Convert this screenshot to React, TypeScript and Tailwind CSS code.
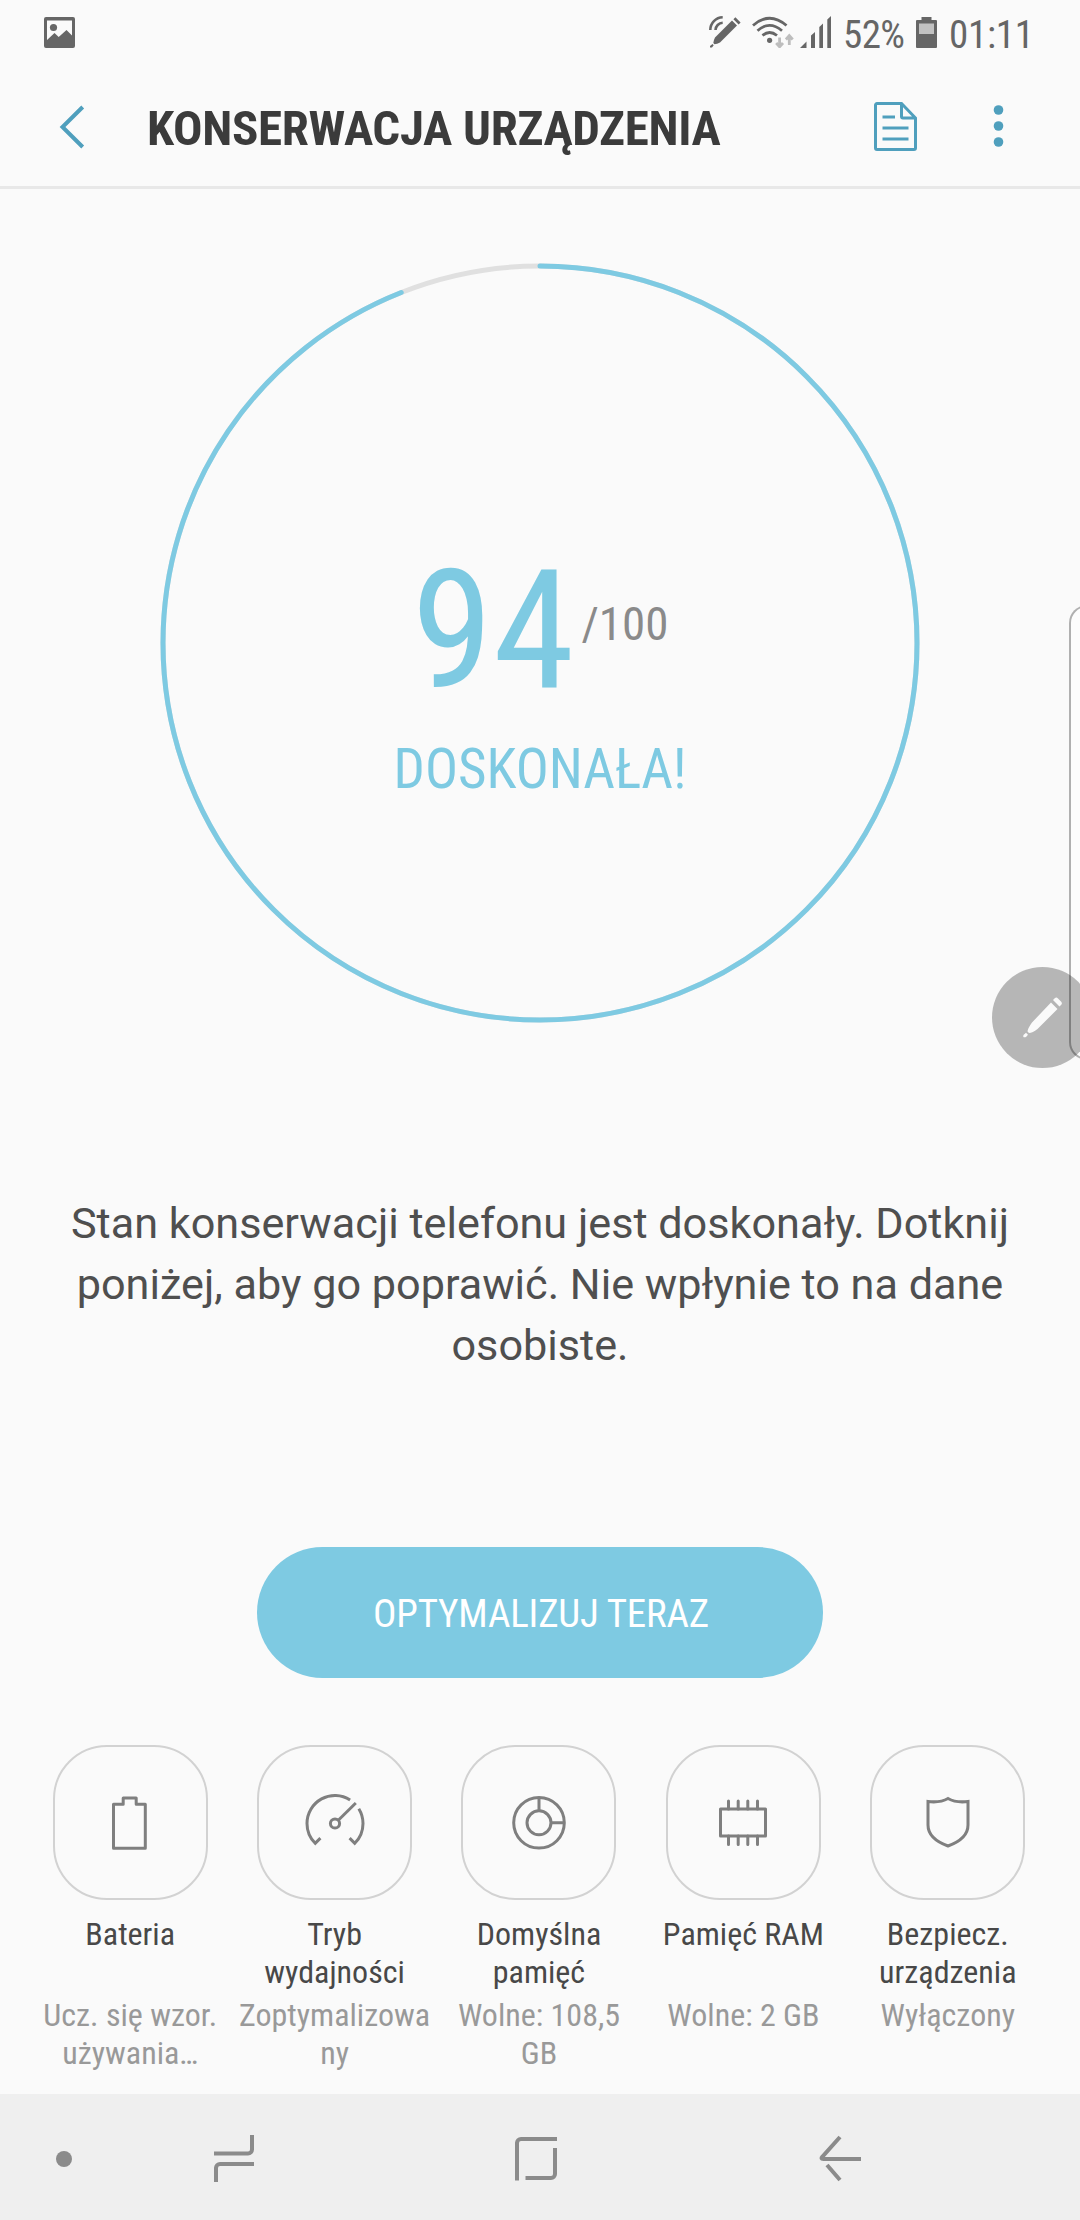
import type { ReactNode } from "react";

const tiles: { title: string; status: string; icon: ReactNode }[] = [
    {
        title: "Bateria",
        status: "Ucz. się wzor. używania…",
        icon: <path d="M23.5 21.3h9.7v-6.2h13v6.2h9.1v43.9H23.5z" strokeLinejoin="round" />,
    },
    {
        title: "Tryb wydajności",
        status: "Zoptymalizowa ny",
        icon: (
            <>
                <circle cx="40" cy="40.5" r="4.6" />
                <path d="M43.3 37.2L60.8 20" />
                <path d="M25.4 55.1l-5.2 5.2A28 28 0 0 1 12 40.5A28 28 0 0 1 55.1 16.9M63.8 25.8A28 28 0 0 1 68 40.5A28 28 0 0 1 59.8 60.3L54.6 55.1" />
            </>
        ),
    },
    {
        title: "Domyślna pamięć",
        status: "Wolne: 108,5 GB",
        icon: (
            <>
                <circle cx="40" cy="39.8" r="25.3" />
                <circle cx="40" cy="39.8" r="12" />
                <path d="M40 14.5v13.3M52 39.8h13.3" />
            </>
        ),
    },
    {
        title: "Pamięć RAM",
        status: "Wolne: 2 GB",
        icon: (
            <>
                <path d="M17.5 26h45v27h-45z" strokeLinejoin="round" />
                <path d="M25.5 26v-8M35.2 26v-8M44.8 26v-8M54.5 26v-8M25.5 53v8.5M35.2 53v8.5M44.8 53v8.5M54.5 53v8.5" strokeLinecap="round" />
            </>
        ),
    },
    {
        title: "Bezpiecz. urządzenia",
        status: "Wyłączony",
        icon: <path d="M20 18.5Q32 20 40 15.5Q48 20 60 18.5V42C60 53 51 59 40 63C29 59 20 53 20 42Z" />,
    },
];

function StatusBar() {
    return (
        <div className="flex h-[64px] items-start pl-[44px] pr-[52px] pt-4 text-[#666]">
            <svg className="mt-px size-[31px]" viewBox="0 0 31 31" fill="currentColor">
                <path fillRule="evenodd" d="M2 0h27a2 2 0 0 1 2 2v27a2 2 0 0 1-2 2H2a2 2 0 0 1-2-2V2a2 2 0 0 1 2-2zM3 3.5v19.5l7.5-7 4.2 4 7.8-7 5.5 5.5V3.5z" />
                <circle cx="9.5" cy="10.5" r="3.6" />
            </svg>
            <svg className="ml-auto h-8 w-[32px]" viewBox="0 0 32 32" fill="none">
                <path d="M1.3 14A12.7 12.7 0 0 1 13.7 1.3M6.5 14A7.5 7.5 0 0 1 13.7 6.8" stroke="currentColor" strokeWidth="2.6" />
                <path d="M23 4.5l5 5L11 26.5Q8 28 5.5 28.3L4.3 27Q4.5 24.5 6 21.5zM24.4 3.2l2-2 5.2 5.2-2 2zM3.5 28l1.2 1.2L3 31.5H1V30z" fill="currentColor" />
            </svg>
            <svg className="ml-[11px] h-8 w-[43px]" viewBox="0 0 43 32" fill="none" strokeWidth="2.8">
                <path d="M1 9.5Q17.5-5 34.5 9.5M5.5 14.7Q17.5 4 30 14.7M10.5 19.5Q17.5 13.5 25 19.5" stroke="currentColor" />
                <circle cx="17.6" cy="24.3" r="2.6" fill="currentColor" />
                <path d="M27.6 21.5v9M24.2 27l3.4 3.8L31 27M37.3 29v-9M33.9 23.5l3.4-3.8 3.4 3.8" stroke="#bdbdbd" />
            </svg>
            <svg className="ml-[5px] h-8 w-[31px]" viewBox="0 0 31 32" fill="currentColor">
                <path d="M0 32l6.5-6.5V32zM11 19.5l4-3.5v16h-4zM19.3 11l3.7-3.5V32h-3.700zM27.3 3.5L31 0v32h-3.7z" />
            </svg>
            <span className="ml-[12px] w-[63px] text-[39px] leading-[38px] tracking-[-0.6px] whitespace-nowrap">52%</span>
            <svg className="ml-[10px] h-8 w-[21px]" viewBox="0 0 21 32">
                <path d="M5.5 1h10v3H20a1 1 0 0 1 1 1v26a1 1 0 0 1-1 1H1a1 1 0 0 1-1-1V5a1 1 0 0 1 1-1h4.5z" fill="currentColor" />
                <path d="M3 7.5h15V18H3z" fill="#c2c2c2" />
            </svg>
            <span className="ml-[12px] w-[79px] text-[39px] leading-[38px] tracking-[-0.3px] whitespace-nowrap">01:11</span>
        </div>
    );
}

function Header() {
    return (
        <header className="flex h-[125px] items-center border-b-[3px] border-[#e8e8e8] pt-[3px] pl-[58px] text-[#4f9fbd]">
            <svg className="h-[44px] w-[28px]" viewBox="0 0 28 44" fill="none" stroke="currentColor" strokeWidth="4">
                <path d="M24.7 2L4.500 22l20.200 20" />
            </svg>
            <h1 className="mt-[3px] ml-[61px] text-[49px] leading-none font-bold tracking-[-0.33px] whitespace-nowrap text-[#3b3b3b]">KONSERWACJA URZĄDZENIA</h1>
            <svg className="ml-auto h-[49px] w-[43px]" viewBox="0 0 43 49" fill="none" stroke="currentColor" strokeWidth="3">
                <path d="M3 1.5h24.5L41.5 16v30a1.5 1.5 0 0 1-1.5 1.5H3A1.5 1.5 0 0 1 1.5 46V3A1.5 1.5 0 0 1 3 1.5zM27.5 2v12.5a1.5 1.5 0 0 0 1.5 1.5h12.5M8.5 15h12.5M8.5 26h26M8.5 37h26" />
            </svg>
            <svg className="mr-[76px] mb-[2px] ml-[76px] h-[44px] w-[11px]" viewBox="0 0 11 44" fill="currentColor">
                <circle cx="5.5" cy="6" r="4.8" />
                <circle cx="5.5" cy="22" r="4.8" />
                <circle cx="5.5" cy="38" r="4.8" />
            </svg>
        </header>
    );
}

function Score() {
    return (
        <div className="relative mx-auto mt-[74px] h-[758px] w-[760px]">
            <svg className="absolute inset-x-0 top-0 size-[760px] -rotate-90" viewBox="0 0 760 760" fill="none" strokeWidth="5">
                <circle cx="380" cy="380" r="377" stroke="#e0e0e0" />
                <circle cx="380" cy="380" r="377" stroke="#7ecae2" pathLength="100" strokeDasharray="94 6" strokeLinecap="round" />
            </svg>
            <div className="flex flex-col items-center pt-[282px] text-[#7ecae2]">
                <div className="flex h-[166px] items-start gap-[7px]">
                    <span className="mt-[3px] text-[165px] leading-[166px]">94</span>
                    <span className="mt-[54px] text-[47px] leading-[50px] text-[#8a8a8a]">/100</span>
                </div>
                <span className="mt-[28px] text-[55px] leading-[60px]">DOSKONAŁA!</span>
            </div>
        </div>
    );
}

function NavBar() {
    return (
        <nav className="flex h-[126px] items-center bg-[#efefef] pb-px pl-14 text-[#8b8b8b]">
            <span className="mt-1 size-4 rounded-full bg-current" />
            <svg className="mt-1 ml-[140px] size-12" viewBox="0 0 48 48" fill="none" stroke="currentColor" strokeWidth="4">
                <path d="M2 18.5h34a4 4 0 0 0 4-4V0M42 29H8a4 4 0 0 0-4 4v14" />
            </svg>
            <svg className="mt-1 ml-[253px] size-12" viewBox="0 0 48 48" fill="none" stroke="currentColor" strokeWidth="4">
                <path d="M4 45.5V8a4 4 0 0 1 4-4h36M12.5 43H38a4 4 0 0 0 4-4V13" />
            </svg>
            <svg className="mt-1 ml-[257px] size-12" viewBox="0 0 48 48" fill="none" stroke="currentColor" strokeWidth="4">
                <path d="M22 2L4.500 21.500Q2 24 5.500 24H43M9 30l13 15" />
            </svg>
        </nav>
    );
}

function App() {
    return (
        <div className="relative flex h-[2220px] w-[1080px] flex-col overflow-hidden bg-[#fafafa] font-['Roboto_Condensed',Roboto,sans-serif] font-stretch-condensed">
            <StatusBar />
            <Header />
            <Score />
            <p className="mx-auto mt-[172px] h-[183px] w-[960px] text-center font-['Roboto',sans-serif] text-[43.2px] leading-[61px] text-[#4f4f4f] font-stretch-normal">
                Stan konserwacji telefonu jest doskonały. Dotknij poniżej, aby go poprawić. Nie wpłynie to na dane osobiste.
            </p>
            <button className="mx-auto mt-[171px] h-[131px] w-[566px] shrink-0 rounded-full bg-[#7ecae2] pt-1 pl-0.5 text-[39px] tracking-[-0.2px] text-white">
                OPTYMALIZUJ TERAZ
            </button>
            <div className="mt-[67px] ml-[28px] grid h-[349px] w-[1022px] grid-cols-5">
                {tiles.map((tile) => (
                    <div key={tile.title} className="flex flex-col items-center text-center text-[32px] leading-[38px]">
                        <div className="flex size-[155px] items-center justify-center rounded-[54px] border-2 border-[#d2d2d2]">
                            <svg className="size-20" viewBox="0 0 80 80" fill="none" stroke="#7f7f7f" strokeWidth="3">
                                {tile.icon}
                            </svg>
                        </div>
                        <div className="mt-[15px] h-[76px] w-[170px] text-[#484848]">{tile.title}</div>
                        <div className="mt-[5px] w-[194px] text-[#999]">{tile.status}</div>
                    </div>
                ))}
            </div>
            <NavBar />

            {/* edge panel handle */}
            <div className="absolute top-[605px] left-[1069px] h-[455px] w-10 rounded-[18px] border-2 border-black/30 bg-white/50" />
            <div className="absolute top-[967px] left-[992px] size-[101px] rounded-full bg-black/27">
                <svg className="mt-[30px] ml-[30px] size-[42px]" viewBox="0 0 42 42" fill="#fafafa">
                    <path d="M29 5.5l6.5 6.5L15.5 32Q10.5 36 7 36L5.5 34.5Q6 31 10 25.5zM31 3l2-2q1.500-1 3 .5l3 3q1.500 1.500.5 3l-2 2zM4 35.800l2 2L4 40q-2 .5-2.500 0t0-2z" />
                </svg>
            </div>
        </div>
    );
}

export default App;
